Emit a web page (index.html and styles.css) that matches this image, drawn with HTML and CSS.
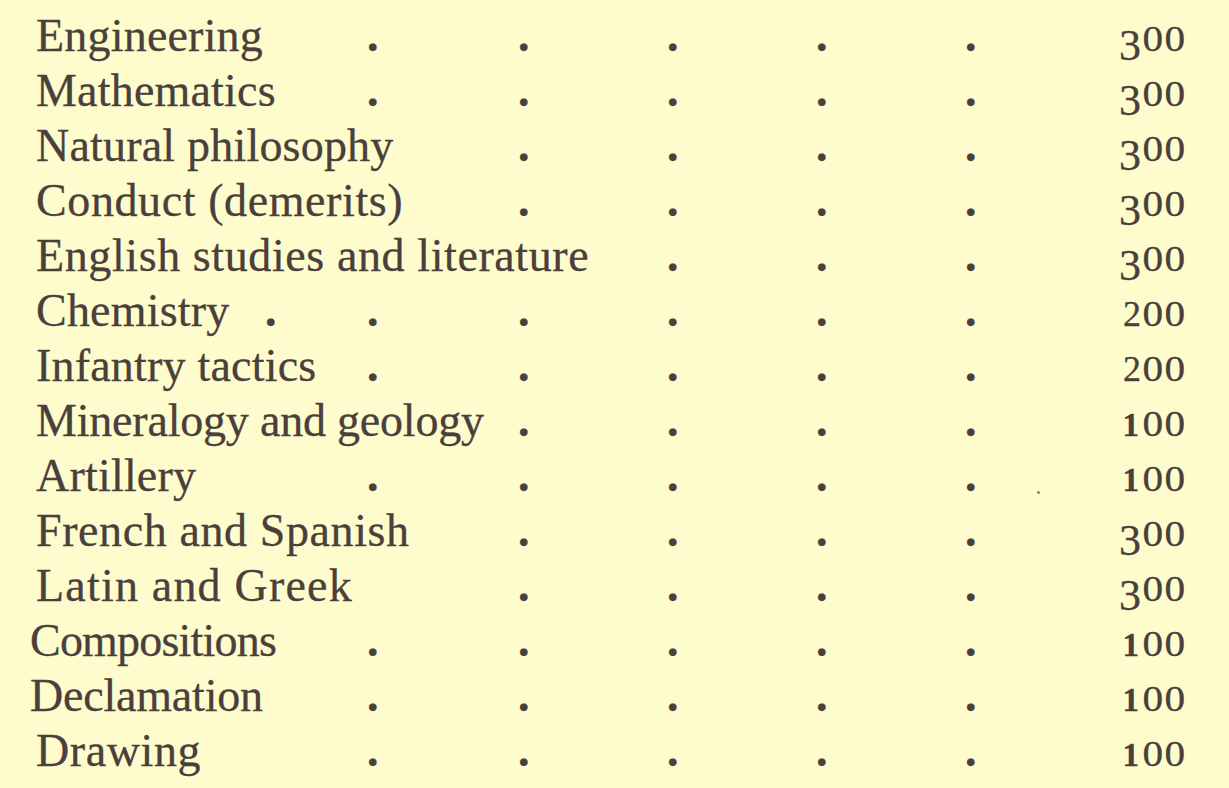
FILE: index.html
```html
<!DOCTYPE html>
<html lang="en">
<head>
<meta charset="utf-8">
<title>Subjects</title>
<link rel="stylesheet" href="styles.css">
</head>
<body>
<div class="page">
  <div class="row"><span class="label s2">Engineering</span><span class="dot">.</span><span class="dot">.</span><span class="dot">.</span><span class="dot">.</span><span class="dot">.</span><span class="num"><span class="dd">3</span><span class="dl">0</span><span class="dl">0</span></span></div>
  <div class="row"><span class="label s2">Mathematics</span><span class="dot">.</span><span class="dot">.</span><span class="dot">.</span><span class="dot">.</span><span class="dot">.</span><span class="num"><span class="dd">3</span><span class="dl">0</span><span class="dl">0</span></span></div>
  <div class="row"><span class="label s3">Natural philosophy</span><span class="dot">.</span><span class="dot">.</span><span class="dot">.</span><span class="dot">.</span><span class="num"><span class="dd">3</span><span class="dl">0</span><span class="dl">0</span></span></div>
  <div class="row"><span class="label s3 wide">Conduct (demerits)</span><span class="dot">.</span><span class="dot">.</span><span class="dot">.</span><span class="dot">.</span><span class="num"><span class="dd">3</span><span class="dl">0</span><span class="dl">0</span></span></div>
  <div class="row"><span class="label s4 wide">English studies and literature</span><span class="dot">.</span><span class="dot">.</span><span class="dot">.</span><span class="num"><span class="dd">3</span><span class="dl">0</span><span class="dl">0</span></span></div>
  <div class="row"><span class="label s1">Chemistry</span><span class="dot">.</span><span class="dot">.</span><span class="dot">.</span><span class="dot">.</span><span class="dot">.</span><span class="dot">.</span><span class="num"><span class="dx">2</span><span class="dl">0</span><span class="dl">0</span></span></div>
  <div class="row"><span class="label s2">Infantry tactics</span><span class="dot">.</span><span class="dot">.</span><span class="dot">.</span><span class="dot">.</span><span class="dot">.</span><span class="num"><span class="dx">2</span><span class="dl">0</span><span class="dl">0</span></span></div>
  <div class="row"><span class="label s3 tight">Mineralogy and geology</span><span class="dot">.</span><span class="dot">.</span><span class="dot">.</span><span class="dot">.</span><span class="num"><span class="di">1</span><span class="dl">0</span><span class="dl">0</span></span></div>
  <div class="row"><span class="label s2">Artillery</span><span class="dot">.</span><span class="dot">.</span><span class="dot">.</span><span class="dot">.</span><span class="dot">.</span><span class="num"><span class="di">1</span><span class="dl">0</span><span class="dl">0</span></span><span class="speck"></span></div>
  <div class="row"><span class="label s3 wide">French and Spanish</span><span class="dot">.</span><span class="dot">.</span><span class="dot">.</span><span class="dot">.</span><span class="num"><span class="dd">3</span><span class="dl">0</span><span class="dl">0</span></span></div>
  <div class="row"><span class="label s3 wider">Latin and Greek</span><span class="dot">.</span><span class="dot">.</span><span class="dot">.</span><span class="dot">.</span><span class="num"><span class="dd">3</span><span class="dl">0</span><span class="dl">0</span></span></div>
  <div class="row"><span class="label s2 out narrow">Compositions</span><span class="dot">.</span><span class="dot">.</span><span class="dot">.</span><span class="dot">.</span><span class="dot">.</span><span class="num"><span class="di">1</span><span class="dl">0</span><span class="dl">0</span></span></div>
  <div class="row"><span class="label s2 out tight">Declamation</span><span class="dot">.</span><span class="dot">.</span><span class="dot">.</span><span class="dot">.</span><span class="dot">.</span><span class="num"><span class="di">1</span><span class="dl">0</span><span class="dl">0</span></span></div>
  <div class="row"><span class="label s2 wide">Drawing</span><span class="dot">.</span><span class="dot">.</span><span class="dot">.</span><span class="dot">.</span><span class="dot">.</span><span class="num"><span class="di">1</span><span class="dl">0</span><span class="dl">0</span></span></div>
</div>
</body>
</html>
```

FILE: styles.css
```css
html, body {
  margin: 0;
  padding: 0;
  background: #fefccd;
}

body {
  width: 1229px;
  height: 788px;
  overflow: hidden;
  font-family: "Liberation Serif", "Times New Roman", serif;
  color: #4a3f3b;
}

.page {
  padding: 8px 44px 0 36px;
  display: flex;
  flex-direction: column;
}

.row {
  position: relative;
  display: grid;
  grid-template-columns: 229px 102px 151px 149px 149px 149px 60px 1fr;
  height: 55px;
  line-height: 55px;
  font-size: 46px;
  white-space: nowrap;
  -webkit-text-stroke: 0.3px #4a3f3b;
}

.label {
  letter-spacing: 0.2px;
}

.wide { letter-spacing: 0.6px; }
.wider { letter-spacing: 1.2px; }
.tight { letter-spacing: -0.2px; }
.narrow { letter-spacing: -0.8px; }

.s1 { grid-column: 1 / span 1; }
.s2 { grid-column: 1 / span 2; }
.s3 { grid-column: 1 / span 3; }
.s4 { grid-column: 1 / span 4; }

.out { margin-left: -6px; }

.dot {
  display: block;
  font-weight: bold;
}

.num {
  grid-column: 8;
  justify-self: end;
}

.dl {
  display: inline-block;
  font-size: 35px;
  transform: scaleX(1.18);
  margin: 0 2px;
}

.dd {
  font-size: 44px;
  vertical-align: -9px;
  margin-right: 1px;
}

.dx {
  font-size: 36px;
  margin-right: 1px;
}

.di {
  font-size: 33px;
  font-weight: bold;
  margin-right: 3px;
}

.speck {
  position: absolute;
  left: 1001px;
  top: 43px;
  width: 3px;
  height: 3px;
  border-radius: 50%;
  background: #8c8170;
}
```
